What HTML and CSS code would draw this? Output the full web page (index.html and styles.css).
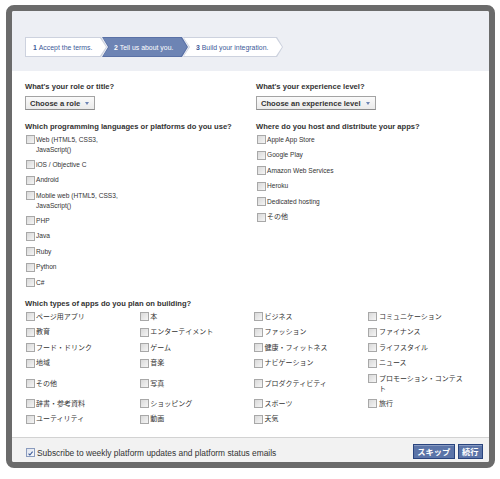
FILE: index.html
```html
<!DOCTYPE html>
<html lang="ja">
<head>
<meta charset="utf-8">
<title>Tell us about you</title>
<link rel="stylesheet" href="styles.css">
</head>
<body>
<div class="dialog">
  <div class="header">
    <ol class="steps">
      <li class="step first"><span><b>1</b>&nbsp;Accept the terms.</span></li>
      <li class="step active"><span><b>2</b>&nbsp;Tell us about you.</span></li>
      <li class="step third"><span><b>3</b>&nbsp;Build your integration.</span></li>
    </ol>
  </div>

  <div class="content">
    <div class="cols">
      <div class="col">
        <h3>What's your role or title?</h3>
        <button class="select" type="button">Choose a role<span class="arrow"></span></button>
        <h3>Which programming languages or platforms do you use?</h3>
        <ul class="checks narrow">
          <li><span class="cb"></span><span class="lbl">Web (HTML5, CSS3, JavaScript()</span></li>
          <li><span class="cb"></span><span class="lbl">iOS / Objective C</span></li>
          <li><span class="cb"></span><span class="lbl">Android</span></li>
          <li><span class="cb"></span><span class="lbl">Mobile web (HTML5, CSS3, JavaScript()</span></li>
          <li><span class="cb"></span><span class="lbl">PHP</span></li>
          <li><span class="cb"></span><span class="lbl">Java</span></li>
          <li><span class="cb"></span><span class="lbl">Ruby</span></li>
          <li><span class="cb"></span><span class="lbl">Python</span></li>
          <li><span class="cb"></span><span class="lbl">C#</span></li>
        </ul>
      </div>
      <div class="col">
        <h3>What's your experience level?</h3>
        <button class="select" type="button">Choose an experience level<span class="arrow"></span></button>
        <h3>Where do you host and distribute your apps?</h3>
        <ul class="checks">
          <li><span class="cb"></span><span class="lbl">Apple App Store</span></li>
          <li><span class="cb"></span><span class="lbl">Google Play</span></li>
          <li><span class="cb"></span><span class="lbl">Amazon Web Services</span></li>
          <li><span class="cb"></span><span class="lbl">Heroku</span></li>
          <li><span class="cb"></span><span class="lbl">Dedicated hosting</span></li>
          <li><span class="cb"></span><span class="lbl jp">その他</span></li>
        </ul>
      </div>
    </div>

    <h3 class="types-title">Which types of apps do you plan on building?</h3>
    <ul class="grid">
      <li><span class="cb"></span><span class="lbl">ページ用アプリ</span></li>
      <li><span class="cb"></span><span class="lbl">本</span></li>
      <li><span class="cb"></span><span class="lbl">ビジネス</span></li>
      <li><span class="cb"></span><span class="lbl">コミュニケーション</span></li>
      <li><span class="cb"></span><span class="lbl">教育</span></li>
      <li><span class="cb"></span><span class="lbl">エンターテイメント</span></li>
      <li><span class="cb"></span><span class="lbl">ファッション</span></li>
      <li><span class="cb"></span><span class="lbl">ファイナンス</span></li>
      <li><span class="cb"></span><span class="lbl">フード・ドリンク</span></li>
      <li><span class="cb"></span><span class="lbl">ゲーム</span></li>
      <li><span class="cb"></span><span class="lbl">健康・フィットネス</span></li>
      <li><span class="cb"></span><span class="lbl">ライフスタイル</span></li>
      <li><span class="cb"></span><span class="lbl">地域</span></li>
      <li><span class="cb"></span><span class="lbl">音楽</span></li>
      <li><span class="cb"></span><span class="lbl">ナビゲーション</span></li>
      <li><span class="cb"></span><span class="lbl">ニュース</span></li>
      <li><span class="cb"></span><span class="lbl">その他</span></li>
      <li><span class="cb"></span><span class="lbl">写真</span></li>
      <li><span class="cb"></span><span class="lbl">プロダクティビティ</span></li>
      <li><span class="cb"></span><span class="lbl">プロモーション・コンテスト</span></li>
      <li><span class="cb"></span><span class="lbl">辞書・参考資料</span></li>
      <li><span class="cb"></span><span class="lbl">ショッピング</span></li>
      <li><span class="cb"></span><span class="lbl">スポーツ</span></li>
      <li><span class="cb"></span><span class="lbl">旅行</span></li>
      <li><span class="cb"></span><span class="lbl">ユーティリティ</span></li>
      <li><span class="cb"></span><span class="lbl">動画</span></li>
      <li><span class="cb"></span><span class="lbl">天気</span></li>
    </ul>
  </div>

  <div class="footer">
    <label class="subscribe">
      <span class="cb checked"><svg viewBox="0 0 9 9" width="9" height="9"><path d="M2 4.6 L3.7 6.4 L7.2 2.2" fill="none" stroke="#3b5998" stroke-width="1.4"/></svg></span>
      <span>Subscribe to weekly platform updates and platform status emails</span>
    </label>
    <div class="buttons">
      <button class="btn" type="button">スキップ</button>
      <button class="btn" type="button">続行</button>
    </div>
  </div>
</div>
</body>
</html>
```

FILE: styles.css
```css
html, body {
  margin: 0;
  padding: 0;
  background: #ffffff;
}

body {
  font-family: "Liberation Sans", "Noto Sans CJK JP", sans-serif;
  color: #333333;
  padding: 5px 5px 0 6px;
}

.dialog {
  width: 477px;
  border: 6px solid #6b6b6b;
  border-radius: 8px;
  background: #ffffff;
  overflow: hidden;
}

/* ---------- header / steps ---------- */
.header {
  background: #edeff4;
  height: 60px;
  box-sizing: border-box;
  padding: 26px 0 0 13px;
}

.steps {
  display: flex;
  list-style: none;
  margin: 0;
  padding: 0;
  height: 20px;
}

.step {
  height: 20px;
  margin-left: -5px;
  background: #cdd2de;
  clip-path: polygon(0 0, calc(100% - 6px) 0, 100% 50%, calc(100% - 6px) 100%, 0 100%, 6px 50%);
  font-size: 6.9px;
  color: #3b5998;
}

.step > span {
  display: flex;
  align-items: center;
  height: 18px;
  margin: 1px;
  background: #ffffff;
  white-space: nowrap;
  padding-left: 11px;
  clip-path: polygon(0 0, calc(100% - 6px) 0, 100% 50%, calc(100% - 6px) 100%, 0 100%, 6px 50%);
}

.step.first {
  width: 82px;
  margin-left: 0;
  clip-path: polygon(0 0, calc(100% - 6px) 0, 100% 50%, calc(100% - 6px) 100%, 0 100%);
}
.step.first > span {
  padding-left: 7px;
  clip-path: polygon(0 0, calc(100% - 6px) 0, 100% 50%, calc(100% - 6px) 100%, 0 100%);
}

.step.active {
  width: 86px;
  background: #5a71a6;
  color: #ffffff;
}
.step.active > span {
  background: #6d84b4;
}

.step.third {
  width: 100px;
}
.step.third > span {
  padding-left: 12px;
}

/* ---------- content ---------- */
.content {
  padding: 11px 13px 12px 13px;
}

h3 {
  margin: 0;
  font-size: 7.6px;
  line-height: 10px;
  font-weight: bold;
  color: #333333;
}

.cols {
  display: grid;
  grid-template-columns: 221px 220px;
  column-gap: 10px;
}

.col {
  display: flex;
  flex-direction: column;
  align-items: flex-start;
}

.select {
  display: inline-flex;
  align-items: center;
  height: 14px;
  box-sizing: border-box;
  margin: 4px 0 12.3px 0;
  padding: 0 5px 0 4px;
  border: 1px solid #a3a3a3;
  border-bottom-color: #8c8c8c;
  background: linear-gradient(#fafafa, #eaeaea);
  font-family: "Liberation Sans", sans-serif;
  font-size: 7.6px;
  font-weight: bold;
  color: #333333;
}

.arrow {
  display: inline-block;
  width: 0;
  height: 0;
  margin-left: 5px;
  margin-top: 1px;
  border-left: 2.5px solid transparent;
  border-right: 2.5px solid transparent;
  border-top: 3px solid #6d84b4;
}

.checks {
  list-style: none;
  margin: 2.2px 0 0 0;
  padding: 0;
  display: flex;
  flex-direction: column;
  gap: 4.5px;
}

.checks li,
.grid li {
  display: flex;
  align-items: flex-start;
}

.cb {
  flex: none;
  width: 9px;
  height: 9px;
  box-sizing: border-box;
  margin: 1px 1.5px 1px 0.5px;
  border: 1px solid #a8a8a8;
  background: linear-gradient(135deg, #d9d9d9, #f5f5f5);
  display: flex;
}

.lbl {
  font-size: 6.6px;
  line-height: 10px;
  padding-top: 0.5px;
  color: #333333;
}

.lbl.jp {
  font-size: 7px;
}

.narrow .lbl {
  max-width: 88px;
}

.types-title {
  margin-top: 10.5px;
}

.grid {
  list-style: none;
  margin: 2.3px 0 0 0;
  padding: 0;
  display: grid;
  grid-template-columns: repeat(4, 114.3px);
  row-gap: 4.5px;
  align-items: center;
}

.grid .lbl {
  font-size: 7px;
  max-width: 86px;
}

/* ---------- footer ---------- */
.footer {
  display: flex;
  align-items: center;
  justify-content: space-between;
  border-top: 1px solid #d2d2d2;
  background: #f2f2f2;
  padding: 6px 6px 3.5px 13px;
}

.subscribe {
  display: flex;
  align-items: center;
  margin-top: 3px;
  font-size: 8.4px;
  line-height: 10px;
  color: #333333;
}

.subscribe .cb {
  margin: 0 2.5px 0 0.5px;
  border-color: #8a9bbd;
  background: linear-gradient(135deg, #dfe4ee, #f7f8fb);
}

.buttons {
  display: flex;
  gap: 3px;
}

.btn {
  height: 15px;
  box-sizing: border-box;
  padding: 0 3.5px;
  border: 1px solid #29447e;
  background: #5b74a8;
  box-shadow: inset 0 1px 0 #8a9cc2;
  color: #ffffff;
  font-family: "Noto Sans CJK JP", sans-serif;
  font-size: 8.2px;
  font-weight: bold;
  line-height: 13px;
}
```
